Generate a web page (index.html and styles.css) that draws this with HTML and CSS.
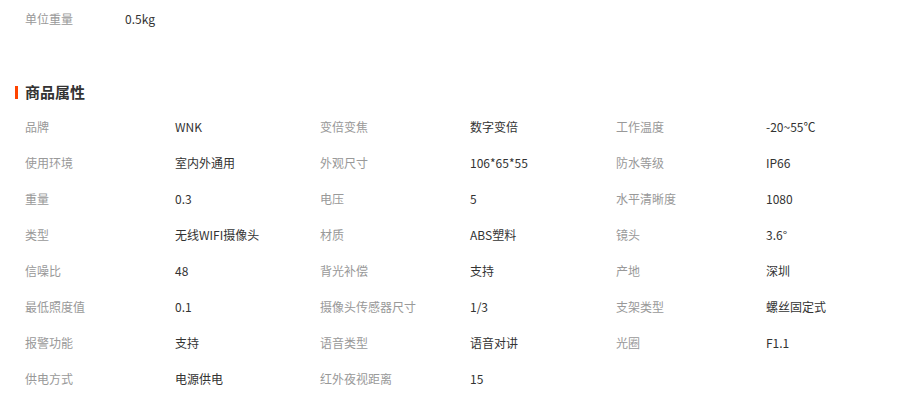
FILE: index.html
```html
<!DOCTYPE html>
<html lang="zh">
<head>
<meta charset="utf-8">
<link rel="stylesheet" href="styles.css">
</head>
<body>
<div class="page">
  <div class="top-row">
    <span class="top-label">单位重量</span>
    <span class="value">0.5kg</span>
  </div>
  <h2 class="heading">商品属性</h2>
  <div class="attrs">
    <div class="cell"><span class="label">品牌</span><span class="value">WNK</span></div>
    <div class="cell"><span class="label">变倍变焦</span><span class="value">数字变倍</span></div>
    <div class="cell"><span class="label">工作温度</span><span class="value">-20~55℃</span></div>
    <div class="cell"><span class="label">使用环境</span><span class="value">室内外通用</span></div>
    <div class="cell"><span class="label">外观尺寸</span><span class="value">106*65*55</span></div>
    <div class="cell"><span class="label">防水等级</span><span class="value">IP66</span></div>
    <div class="cell"><span class="label">重量</span><span class="value">0.3</span></div>
    <div class="cell"><span class="label">电压</span><span class="value">5</span></div>
    <div class="cell"><span class="label">水平清晰度</span><span class="value">1080</span></div>
    <div class="cell"><span class="label">类型</span><span class="value">无线WIFI摄像头</span></div>
    <div class="cell"><span class="label">材质</span><span class="value">ABS塑料</span></div>
    <div class="cell"><span class="label">镜头</span><span class="value">3.6°</span></div>
    <div class="cell"><span class="label">信噪比</span><span class="value">48</span></div>
    <div class="cell"><span class="label">背光补偿</span><span class="value">支持</span></div>
    <div class="cell"><span class="label">产地</span><span class="value">深圳</span></div>
    <div class="cell"><span class="label">最低照度值</span><span class="value">0.1</span></div>
    <div class="cell"><span class="label">摄像头传感器尺寸</span><span class="value">1/3</span></div>
    <div class="cell"><span class="label">支架类型</span><span class="value">螺丝固定式</span></div>
    <div class="cell"><span class="label">报警功能</span><span class="value">支持</span></div>
    <div class="cell"><span class="label">语音类型</span><span class="value">语音对讲</span></div>
    <div class="cell"><span class="label">光圈</span><span class="value">F1.1</span></div>
    <div class="cell"><span class="label">供电方式</span><span class="value">电源供电</span></div>
    <div class="cell"><span class="label">红外夜视距离</span><span class="value">15</span></div>
  </div>
</div>
</body>
</html>
```
FILE: styles.css
```css
html, body {
  margin: 0;
  padding: 0;
  background: #fff;
}
body {
  font-family: "Noto Sans CJK SC", "Noto Sans", sans-serif;
  font-size: 12px;
  color: #333;
}
.page {
  padding: 9px 0 0 25px;
}
.top-row {
  display: flex;
  line-height: 20px;
  height: 20px;
}
.top-label {
  width: 100px;
  color: #999;
}
.value {
  color: #333;
}
.heading {
  position: relative;
  margin: 53px 0 0 0;
  font-size: 15px;
  font-weight: bold;
  line-height: 20px;
  height: 20px;
  color: #333;
}
.heading::before {
  content: "";
  position: absolute;
  left: -10px;
  top: 4px;
  width: 3px;
  height: 13px;
  background: #f40;
}
.attrs {
  margin-top: 7px;
  display: grid;
  grid-template-columns: 295px 296px 285px;
  grid-auto-rows: 36px;
}
.cell {
  display: flex;
  align-items: center;
  line-height: 20px;
}
.label {
  width: 150px;
  flex: none;
  color: #999;
}
```
